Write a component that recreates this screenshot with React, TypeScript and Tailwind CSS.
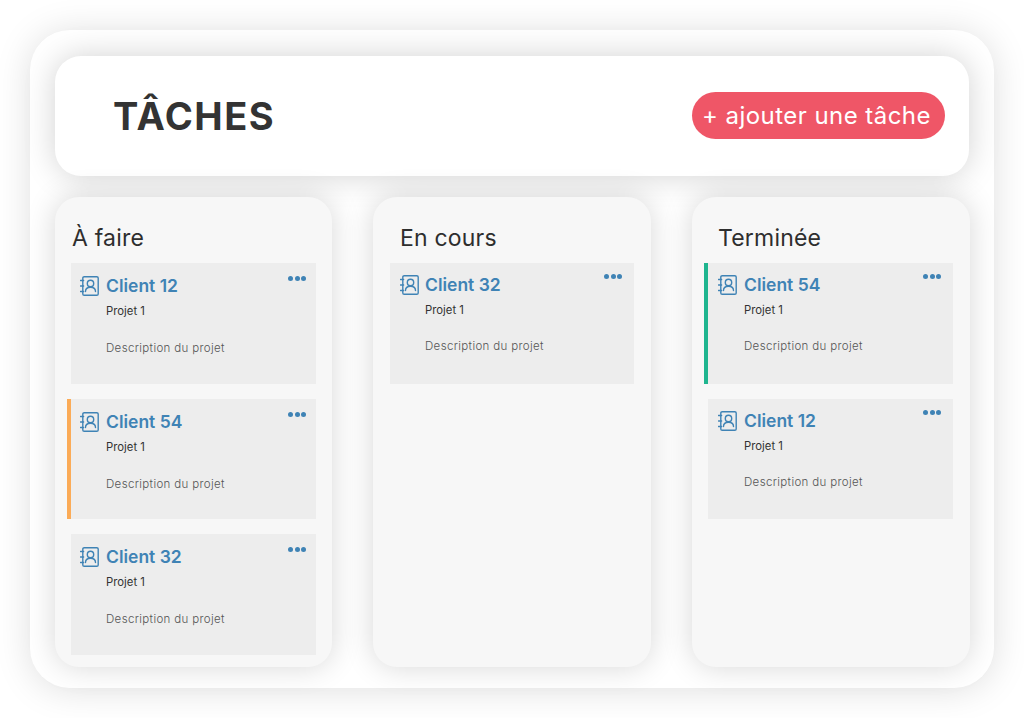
const font = { fontFamily: '"Inter", "Open Sans", sans-serif' };

interface Task {
  client: string;
  bar?: string;
  h: string;
}

interface Column {
  title: string;
  sectionClass: string;
  titleClass: string;
  cardClass: string;
  dotsClass: string;
  gapClass: string;
  projectClass: string;
  descClass: string;
  tasks: Task[];
}

const columns: Column[] = [
  {
    title: "À faire",
    sectionClass: "px-[16px]",
    titleClass: "pl-[1px]",
    cardClass: "pl-[9px] pt-[12px]",
    dotsClass: "right-[10px] top-[13px]",
    gapClass: "gap-[7px]",
    projectClass: "pl-[26px] mt-[5px]",
    descClass: "pl-[26px] mt-[19px]",
    tasks: [
      { client: "Client 12", h: "h-[121px]" },
      { client: "Client 54", bar: "bg-[#fbab57]", h: "h-[120px]" },
      { client: "Client 32", h: "h-[121px]" },
    ],
  },
  {
    title: "En cours",
    sectionClass: "px-[17px]",
    titleClass: "pl-[10px]",
    cardClass: "pl-[10px] pt-[11px]",
    dotsClass: "right-[12px] top-[11px]",
    gapClass: "gap-[6px]",
    projectClass: "pl-[25px] mt-[5px]",
    descClass: "pl-[25px] mt-[18px]",
    tasks: [{ client: "Client 32", h: "h-[121px]" }],
  },
  {
    title: "Terminée",
    sectionClass: "pl-[16px] pr-[17px]",
    titleClass: "pl-[10px]",
    cardClass: "pl-[10px] pt-[11px]",
    dotsClass: "right-[12px] top-[11px]",
    gapClass: "gap-[7px]",
    projectClass: "pl-[26px] mt-[5px]",
    descClass: "pl-[26px] mt-[18px]",
    tasks: [
      { client: "Client 54", bar: "bg-[#1fb58f]", h: "h-[121px]" },
      { client: "Client 12", h: "h-[120px]" },
    ],
  },
];

function AddressBook() {
  return (
    <svg width="19" height="20" viewBox="0 0 19 20" fill="none" stroke="#3f83b5" strokeWidth="1.4" className="shrink-0">
      <rect x="2.8" y="0.7" width="15.4" height="18.6" rx="1.4" />
      <path d="M0.4 4.5h3.2M0.4 10h3.2M0.4 15.5h3.2" strokeLinecap="round" />
      <circle cx="10.5" cy="7.4" r="3.2" />
      <path d="M5.5 15.6c0-3 2-4.4 5-4.4s5 1.4 5 4.4" strokeLinecap="round" />
    </svg>
  );
}

function TaskCard({ task, col }: { task: Task; col: Column }) {
  return (
    <div className={`relative bg-[#ededed] ${task.h} ${col.cardClass}`}>
      {task.bar && <div className={`absolute left-[-4px] top-0 bottom-0 w-[4px] ${task.bar}`} />}
      <div className={`absolute flex gap-[1.5px] ${col.dotsClass}`}>
        <span className="size-[5px] rounded-full bg-[#3f83b5]" />
        <span className="size-[5px] rounded-full bg-[#3f83b5]" />
        <span className="size-[5px] rounded-full bg-[#3f83b5]" />
      </div>
      <div className={`flex items-center ${col.gapClass}`}>
        <AddressBook />
        <span className="text-[17.5px] leading-[22px] font-semibold text-[#3f83b5]">{task.client}</span>
      </div>
      <p className={`${col.projectClass} text-[11.3px] leading-[18px] text-[#333333]`}>Projet 1</p>
      <p className={`${col.descClass} text-[11.5px] leading-[18px] tracking-[0.35px] font-light text-[#555555]`}>
        Description du projet
      </p>
    </div>
  );
}

export default function App() {
  return (
    <div style={font} className="w-[1024px] h-[718px] bg-white pt-[30px] px-[30px] overflow-hidden">
      <div className="w-[964px] h-[658px] bg-white rounded-[40px] shadow-[0_2px_36px_rgba(0,0,0,0.13)] pt-[26px] px-[25px]">
        <header className="h-[120px] bg-white rounded-[26px] shadow-[0_0_32px_rgba(0,0,0,0.18)] flex items-center justify-between pl-[58px] pr-[24px]">
          <h1 className="text-[38px] font-bold text-[#333333] tracking-[1.5px]">TÂCHES</h1>
          <button className="h-[47px] w-[253px] mb-[1px] pr-[4px] rounded-full bg-[#ef5667] text-white text-[24px] leading-none tracking-[0.45px]">
            + ajouter une tâche
          </button>
        </header>
        <div className="grid grid-cols-[277px_278px_278px] gap-x-[41px] mt-[21px]">
          {columns.map((col) => (
            <section key={col.title} className={`h-[470px] bg-[#f7f7f7] rounded-[24px] shadow-[0_0_30px_rgba(0,0,0,0.16)] pt-[27px] ${col.sectionClass}`}>
              <h2 className={`h-[39px] text-[23px] leading-[28px] tracking-[0.2px] text-[#2e2e2e] ${col.titleClass}`}>{col.title}</h2>
              <div className="flex flex-col gap-[15px]">
                {col.tasks.map((task) => (
                  <TaskCard key={task.client} task={task} col={col} />
                ))}
              </div>
            </section>
          ))}
        </div>
      </div>
    </div>
  );
}
